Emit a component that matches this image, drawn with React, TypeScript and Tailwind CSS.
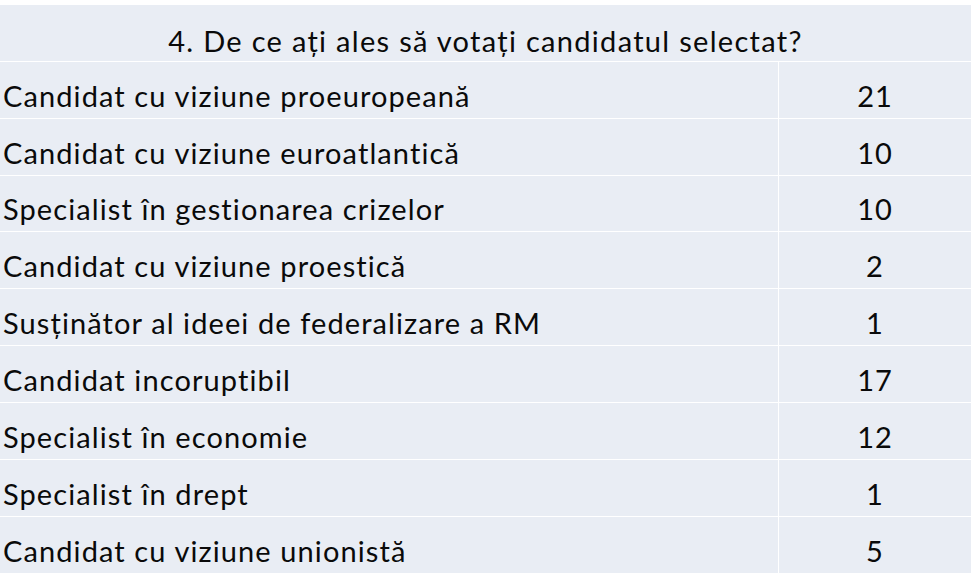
const rows: { label: string; value: number }[] = [
  { label: 'Candidat cu viziune proeuropeană', value: 21 },
  { label: 'Candidat cu viziune euroatlantică', value: 10 },
  { label: 'Specialist în gestionarea crizelor', value: 10 },
  { label: 'Candidat cu viziune proestică', value: 2 },
  { label: 'Susținător al ideei de federalizare a RM', value: 1 },
  { label: 'Candidat incoruptibil', value: 17 },
  { label: 'Specialist în economie', value: 12 },
  { label: 'Specialist în drept', value: 1 },
  { label: 'Candidat cu viziune unionistă', value: 5 },
];

export default function App() {
  return (
    <div
      className="h-[577px] w-[975px] overflow-hidden bg-white pr-[4px] pt-[5px] text-[#0a0a0a] [font-variant-ligatures:none]"
      style={{ fontFamily: 'Lato, "Liberation Sans", sans-serif' }}
    >
      <div className="w-[971px] bg-[#e9edf4]">
        <div className="flex h-[56px] items-end justify-center pb-[6px] text-[29px] leading-none tracking-[1.3px]">
          4. De ce ați ales să votați candidatul selectat?
        </div>
        {rows.map((r, i) => (
          <div
            key={r.label}
            className={`flex border-t border-white text-[29px] leading-none ${i === 2 ? 'h-[56px]' : 'h-[57px]'}`}
          >
            <div className="flex w-[779px] items-end border-r border-white pb-[8px] pl-[3px] tracking-[1.1px]">
              {r.label}
            </div>
            <div className="flex flex-1 items-end justify-center pb-[8px] tracking-[1px]">{r.value}</div>
          </div>
        ))}
      </div>
    </div>
  );
}
